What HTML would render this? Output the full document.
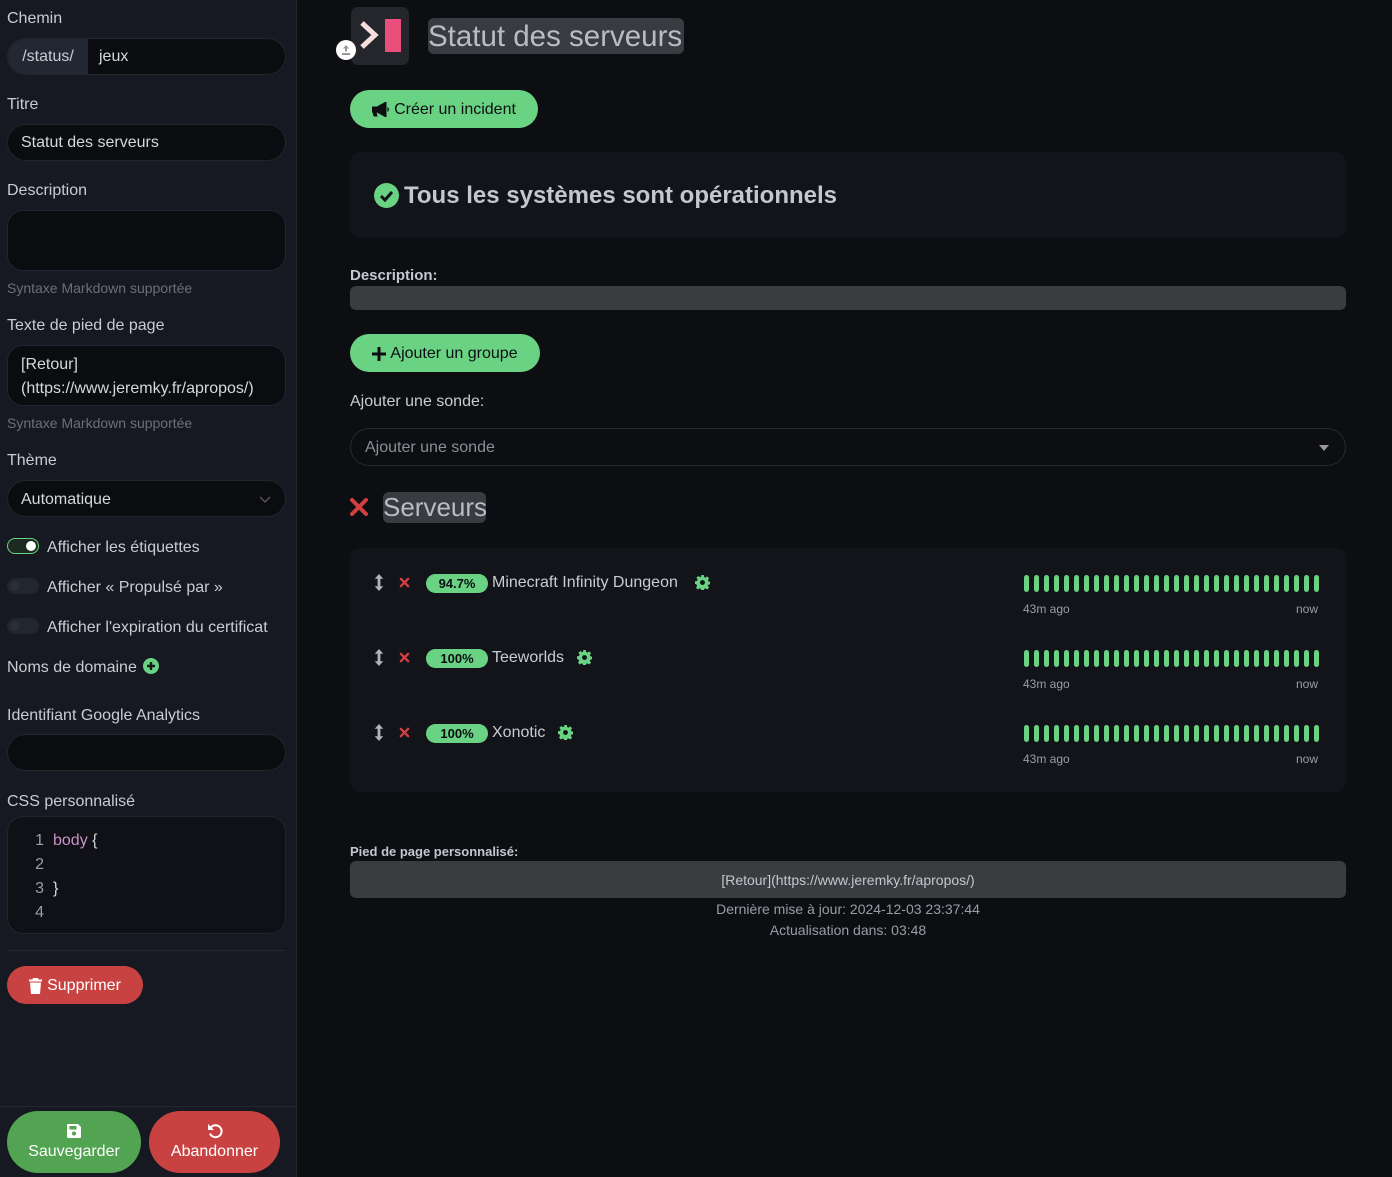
<!DOCTYPE html>
<html><head><meta charset="utf-8"><style>
*{box-sizing:border-box;margin:0;padding:0}
body{width:1392px;height:1177px;background:#0d0e12;font-family:"Liberation Sans",sans-serif;color:#d0d2d8;position:relative;overflow:hidden;font-size:16px}
.a{position:absolute}
.side{left:0;top:0;width:297px;height:1177px;background:#161921;border-right:1px solid #22252d}
.lbl{left:7px;font-size:16px;color:#c9ccd2}
.inp{left:7px;width:279px;background:#0b0c10;border:1px solid #22252d;border-radius:19px;color:#d6d8dc;padding-left:13px;display:flex;align-items:center}
.hint{left:7px;font-size:14px;color:#6b6f78}
.tg{left:7px;width:32px;height:16px;border-radius:8px;background:#222631}
.tl{left:47px;font-size:16px;color:#c9ccd2}
.btn{border-radius:20px;display:flex;align-items:center;justify-content:center;font-size:16px}
.bars{display:flex;gap:5px}
.bars i{display:block;width:5px;height:17px;border-radius:3px;background:#69d283}
.pill{background:#69d283;color:#0d0e12;border-radius:10px;font-size:13px;font-weight:bold;width:62px;height:19px;display:flex;align-items:center;justify-content:center}
.sm{font-size:12px;color:#9a9da5}
</style></head><body>
<svg width="0" height="0" style="position:absolute"><defs>
<symbol id="gear" viewBox="0 0 16 16"><path fill="#69d283" d="M6.6 0h2.8l.4 2.2 1.3.6 1.9-1.3 2 2-1.3 1.9.6 1.3 2.2.4v2.8l-2.2.4-.6 1.3 1.3 1.9-2 2-1.9-1.3-1.3.6-.4 2.2H6.6l-.4-2.2-1.3-.6-1.9 1.3-2-2 1.3-1.9-.6-1.3L0 9.4V6.6l2.2-.4.6-1.3-1.3-1.9 2-2 1.9 1.3 1.3-.6z"/><circle cx="8" cy="8" r="2.6" fill="#121419"/></symbol>
<symbol id="arr" viewBox="0 0 10 18"><path fill="#b0b3ba" d="M5 0L9.5 5H6.5V13H9.5L5 18 .5 13H3.5V5H.5z"/></symbol>
<symbol id="x" viewBox="0 0 12 12"><path d="M2 2L10 10M10 2L2 10" stroke="#d04040" stroke-width="2.6" stroke-linecap="round"/></symbol>
</defs></svg>
<div class="a side"></div>
<div class="a lbl" style="top:10px">Chemin</div>
<div class="a inp" style="top:38px;height:37px;padding-left:0;overflow:hidden"><div style="background:#232733;height:100%;width:80px;display:flex;align-items:center;justify-content:center;color:#c9ccd2">/status/</div><div style="padding-left:11px">jeux</div></div>
<div class="a lbl" style="top:96px">Titre</div>
<div class="a inp" style="top:124px;height:37px">Statut des serveurs</div>
<div class="a lbl" style="top:182px">Description</div>
<div class="a inp" style="top:210px;height:61px;border-radius:16px"></div>
<div class="a hint" style="top:280px">Syntaxe Markdown supportée</div>
<div class="a lbl" style="top:317px">Texte de pied de page</div>
<div class="a inp" style="top:345px;height:61px;border-radius:16px;line-height:24px;padding-top:2px">[Retour]<br>(https://www.jeremky.fr/apropos/)</div>
<div class="a hint" style="top:415px">Syntaxe Markdown supportée</div>
<div class="a lbl" style="top:452px">Thème</div>
<div class="a inp" style="top:480px;height:37px;padding-top:2px">Automatique<svg style="position:absolute;right:14px;top:15px" width="12" height="8"><polyline points="1,1 6,6 11,1" fill="none" stroke="#555" stroke-width="1.5"/></svg></div>
<div class="a tg" style="top:538px;background:#1d2a22;border:1px solid #69d283"><div style="position:absolute;right:2px;top:2px;width:10px;height:10px;border-radius:50%;background:#fff"></div></div>
<div class="a tl" style="top:539px">Afficher les étiquettes</div>
<div class="a tg" style="top:578px"><div style="position:absolute;left:3px;top:3px;width:10px;height:10px;border-radius:50%;background:#2a2e39"></div></div>
<div class="a tl" style="top:579px">Afficher « Propulsé par »</div>
<div class="a tg" style="top:618px"><div style="position:absolute;left:3px;top:3px;width:10px;height:10px;border-radius:50%;background:#2a2e39"></div></div>
<div class="a tl" style="top:619px">Afficher l'expiration du certificat</div>
<div class="a lbl" style="top:659px">Noms de domaine</div>
<svg class="a" style="left:143px;top:658px" width="16" height="16"><circle cx="8" cy="8" r="8" fill="#69d283"/><path d="M8 4V12M4 8H12" stroke="#161921" stroke-width="2.4"/></svg>
<div class="a lbl" style="top:707px">Identifiant Google Analytics</div>
<div class="a inp" style="top:734px;height:37px"></div>
<div class="a lbl" style="top:793px">CSS personnalisé</div>
<div class="a inp" style="top:816px;height:118px;border-radius:16px;background:#101116;align-items:flex-start;padding-top:12px;padding-left:0;line-height:24px;font-size:16px"><div style="color:#9a9da5;text-align:right;width:36px">1<br>2<br>3<br>4</div><div style="margin-left:9px"><span style="color:#c792c8">body</span> {<br><br>}</div></div>
<div class="a" style="left:7px;top:950px;width:279px;height:1px;background:#24272f"></div>
<div class="a btn" style="left:7px;top:966px;width:136px;height:38px;background:#c84242;color:#fff;padding-top:1px"><svg width="13" height="16" viewBox="0 0 13 16" style="margin-right:5px"><path fill="#fff" d="M4 0H9L9.5 1.5H13V3.5H0V1.5H3.5z M1 4.5H12L11 16H2z"/></svg>Supprimer</div>
<div class="a" style="left:0;top:1106px;width:297px;height:1px;background:#24272f"></div>
<div class="a btn" style="left:7px;top:1111px;width:134px;height:62px;background:#52a352;color:#fff;flex-direction:column;border-radius:31px"><svg width="14" height="14" viewBox="0 0 14 14" style="margin-bottom:5px"><path fill="#fff" d="M1 0H11L14 3V13Q14 14 13 14H1Q0 14 0 13V1Q0 0 1 0z"/><rect x="2.5" y="2" width="7" height="3.5" fill="#52a352"/><circle cx="7" cy="9.5" r="2" fill="#52a352"/></svg>Sauvegarder</div>
<div class="a btn" style="left:149px;top:1111px;width:131px;height:62px;background:#c84242;color:#fff;flex-direction:column;border-radius:31px"><svg width="16" height="16" viewBox="0 0 16 16" style="margin-bottom:4px"><path d="M3.5 5A6 6 0 1 1 3 10.5" fill="none" stroke="#fff" stroke-width="2"/><path d="M1 1V7H7z" fill="#fff"/></svg>Abandonner</div>

<!-- main -->
<div class="a" style="left:351px;top:7px;width:58px;height:58px;background:#24262b;border-radius:7px"></div>
<svg class="a" style="left:351px;top:7px" width="58" height="58"><polyline points="11,16 24,28 11,40" fill="none" stroke="#f7dedc" stroke-width="5"/><rect x="34" y="12" width="16" height="33" fill="#ea4e7a"/></svg>
<svg class="a" style="left:336px;top:40px" width="20" height="20"><circle cx="10" cy="10" r="10" fill="#fff"/><path d="M10 5L13 8.5H11V11.5H9V8.5H7z M6 13H14V15H6z" fill="#999"/></svg>
<div class="a" style="left:428px;top:18px;width:256px;height:36px;background:#3a3b40;border-radius:6px"></div>
<div class="a" style="left:428px;top:19px;font-size:29.5px;color:#b8bcc6;line-height:36px">Statut des serveurs</div>
<div class="a btn" style="left:350px;top:90px;width:188px;height:38px;background:#69d283;color:#0d0e12;padding-top:1px"><svg width="18" height="15" viewBox="0 0 18 15" style="margin-right:4px"><path fill="#0d0e12" d="M0 5H5L14 0V15L5 10H4L5 14H2L1 10H0z M15.5 5.5Q17.5 7.5 15.5 9.5" stroke="#0d0e12" stroke-width="1"/></svg>Créer un incident</div>
<div class="a" style="left:350px;top:152px;width:996px;height:86px;background:#121419;border-radius:10px"></div>
<svg class="a" style="left:374px;top:183px" width="25" height="25"><circle cx="12.5" cy="12.5" r="12.5" fill="#69d283"/><polyline points="7,13 11,17 18,9" fill="none" stroke="#121419" stroke-width="3"/></svg>
<div class="a" style="left:404px;top:182px;font-size:24px;font-weight:bold;color:#c4c7cf">Tous les systèmes sont opérationnels</div>
<div class="a" style="left:350px;top:267px;font-size:15px;font-weight:bold;color:#c4c7cf">Description:</div>
<div class="a" style="left:350px;top:286px;width:996px;height:24px;background:#3b3c40;border-radius:6px"></div>
<div class="a btn" style="left:350px;top:334px;width:190px;height:38px;background:#69d283;color:#0d0e12;padding-top:1px"><svg width="14" height="14" style="margin-right:4px"><path d="M7 0V14M0 7H14" stroke="#0d0e12" stroke-width="3"/></svg>Ajouter un groupe</div>
<div class="a" style="left:350px;top:393px;font-size:16px;color:#c9ccd2">Ajouter une sonde:</div>
<div class="a" style="left:350px;top:428px;width:996px;height:38px;border:1px solid #262833;border-radius:19px;padding-left:14px;padding-top:2px;display:flex;align-items:center;color:#8b8e96">Ajouter une sonde<svg style="position:absolute;right:16px;top:16px" width="10" height="6"><path d="M0 0H10L5 6z" fill="#999"/></svg></div>
<svg class="a" style="left:350px;top:498px" width="18" height="18"><path d="M2 2L16 16M16 2L2 16" stroke="#d04040" stroke-width="4" stroke-linecap="round"/></svg>
<div class="a" style="left:383px;top:492px;width:103px;height:31px;background:#3a3b40;border-radius:6px"></div>
<div class="a" style="left:383px;top:492px;font-size:26px;color:#b8bcc6">Serveurs</div>
<div class="a" style="left:350px;top:548px;width:996px;height:244px;background:#121419;border-radius:10px"></div>

<svg class="a" style="left:374px;top:574px" width="10" height="17"><use href="#arr"/></svg>
<svg class="a" style="left:399px;top:577px" width="11" height="11"><use href="#x"/></svg>
<div class="a pill" style="left:426px;top:574px">94.7%</div>
<div class="a" style="left:492px;top:574px;color:#c9ccd2">Minecraft Infinity Dungeon</div>
<svg class="a" style="left:695px;top:575px" width="15" height="15"><use href="#gear"/></svg>
<svg class="a" style="left:374px;top:649px" width="10" height="17"><use href="#arr"/></svg>
<svg class="a" style="left:399px;top:652px" width="11" height="11"><use href="#x"/></svg>
<div class="a pill" style="left:426px;top:649px">100%</div>
<div class="a" style="left:492px;top:649px;color:#c9ccd2">Teeworlds</div>
<svg class="a" style="left:577px;top:650px" width="15" height="15"><use href="#gear"/></svg>
<svg class="a" style="left:374px;top:724px" width="10" height="17"><use href="#arr"/></svg>
<svg class="a" style="left:399px;top:727px" width="11" height="11"><use href="#x"/></svg>
<div class="a pill" style="left:426px;top:724px">100%</div>
<div class="a" style="left:492px;top:724px;color:#c9ccd2">Xonotic</div>
<svg class="a" style="left:558px;top:725px" width="15" height="15"><use href="#gear"/></svg>

<div class="a bars" style="left:1024px;top:575px"><i></i><i></i><i></i><i></i><i></i><i></i><i></i><i></i><i></i><i></i><i></i><i></i><i></i><i></i><i></i><i></i><i></i><i></i><i></i><i></i><i></i><i></i><i></i><i></i><i></i><i></i><i></i><i></i><i></i><i></i></div>
<div class="a sm" style="left:1023px;top:602px">43m ago</div><div class="a sm" style="left:1296px;top:602px">now</div>
<div class="a bars" style="left:1024px;top:650px"><i></i><i></i><i></i><i></i><i></i><i></i><i></i><i></i><i></i><i></i><i></i><i></i><i></i><i></i><i></i><i></i><i></i><i></i><i></i><i></i><i></i><i></i><i></i><i></i><i></i><i></i><i></i><i></i><i></i><i></i></div>
<div class="a sm" style="left:1023px;top:677px">43m ago</div><div class="a sm" style="left:1296px;top:677px">now</div>
<div class="a bars" style="left:1024px;top:725px"><i></i><i></i><i></i><i></i><i></i><i></i><i></i><i></i><i></i><i></i><i></i><i></i><i></i><i></i><i></i><i></i><i></i><i></i><i></i><i></i><i></i><i></i><i></i><i></i><i></i><i></i><i></i><i></i><i></i><i></i></div>
<div class="a sm" style="left:1023px;top:752px">43m ago</div><div class="a sm" style="left:1296px;top:752px">now</div>

<div class="a" style="left:350px;top:844px;font-size:13px;font-weight:bold;color:#c4c7cf">Pied de page personnalisé:</div>
<div class="a" style="left:350px;top:861px;width:996px;height:37px;background:#3b3c40;border-radius:6px;display:flex;align-items:center;justify-content:center;font-size:14px;color:#c4c7cf">[Retour](https://www.jeremky.fr/apropos/)</div>
<div class="a" style="left:350px;top:899px;width:996px;text-align:center;font-size:14px;color:#9a9da5;line-height:21px">Dernière mise à jour: 2024-12-03 23:37:44<br>Actualisation dans: 03:48</div>
</body></html>
